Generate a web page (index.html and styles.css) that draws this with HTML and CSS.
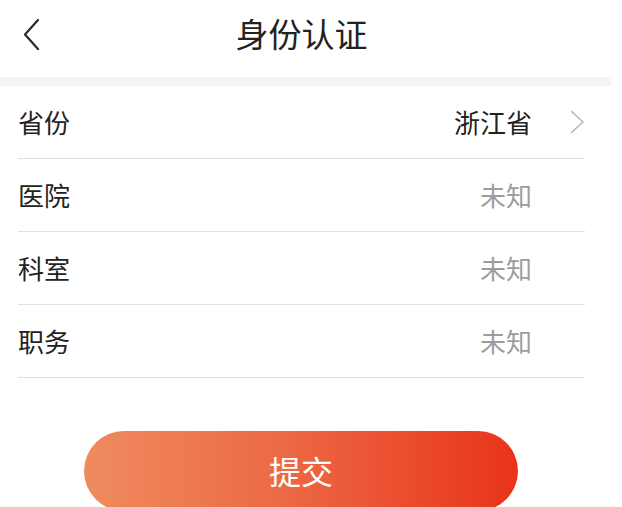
FILE: index.html
```html
<!DOCTYPE html>
<html lang="zh-CN">
<head>
<meta charset="utf-8">
<title>身份认证</title>
<link rel="stylesheet" href="styles.css">
</head>
<body>
<div class="page">
  <header class="header">
    <div class="back">
      <svg width="18" height="32" viewBox="0 0 18 32"><path d="M16 2 L3 16.5 L16 31" fill="none" stroke="#2a2a2a" stroke-width="2.2" stroke-linecap="round" stroke-linejoin="round"/></svg>
    </div>
    <h1 class="title">身份认证</h1>
    <div class="spacer"></div>
  </header>
  <div class="band"></div>
  <section class="form">
    <div class="row">
      <span class="label">省份</span>
      <span class="value value-set">浙江省</span>
      <span class="arrow">
        <svg width="15" height="24" viewBox="0 0 15 24"><path d="M1.5 1.5 L13 12 L1.5 22.5" fill="none" stroke="#b5b5b5" stroke-width="1.6" stroke-linecap="round" stroke-linejoin="round"/></svg>
      </span>
    </div>
    <div class="row">
      <span class="label">医院</span>
      <span class="value">未知</span>
      <span class="arrow"></span>
    </div>
    <div class="row">
      <span class="label">科室</span>
      <span class="value">未知</span>
      <span class="arrow"></span>
    </div>
    <div class="row">
      <span class="label">职务</span>
      <span class="value">未知</span>
      <span class="arrow"></span>
    </div>
  </section>
  <div class="actions">
    <button class="submit">提交</button>
  </div>
</div>
</body>
</html>
```

FILE: styles.css
```css
* { box-sizing: border-box; }
html, body {
  margin: 0;
  padding: 0;
  background: #ffffff;
  overflow: hidden;
}
body {
  font-family: "Noto Sans CJK SC", "Noto Sans", sans-serif;
  color: #222222;
}
.page {
  width: 611px;
  height: 507px;
}
.header {
  height: 77px;
  display: grid;
  grid-template-columns: 1fr auto 1fr;
  align-items: center;
  padding: 0 8px 11px 0;
}
.back {
  padding-left: 22px;
  display: flex;
  align-items: center;
  padding-top: 2px;
}
.back svg { display: block; }
.title {
  margin: 0;
  font-size: 33px;
  font-weight: 400;
  color: #222222;
  line-height: 1;
}
.band {
  height: 9px;
  background: #f2f5f6;
}
.form {
  padding: 0 26px 0 18px;
}
.row {
  height: 73px;
  display: flex;
  align-items: center;
  border-bottom: 1.5px solid #e2e2e2;
}
.row:first-child {
  height: 72.5px;
}
.label {
  flex: 1;
  font-size: 26px;
  line-height: 1;
  color: #222222;
}
.value {
  font-size: 26px;
  line-height: 1;
  color: #9c9c9c;
}
.value-set {
  color: #222222;
}
.arrow {
  width: 53px;
  display: flex;
  justify-content: flex-end;
  align-items: center;
}
.arrow svg { display: block; }
.actions {
  padding: 53px 93px 0 84px;
}
.submit {
  display: block;
  width: 100%;
  height: 80px;
  border: 0;
  border-radius: 40px;
  background: linear-gradient(90deg, #ef8b5f 0%, #ec6a45 45%, #e9331a 100%);
  color: #ffffff;
  font-family: "Noto Sans CJK SC", "Noto Sans", sans-serif;
  font-size: 32px;
  font-weight: 400;
  line-height: 1;
  padding: 0 0 2px;
}
```
